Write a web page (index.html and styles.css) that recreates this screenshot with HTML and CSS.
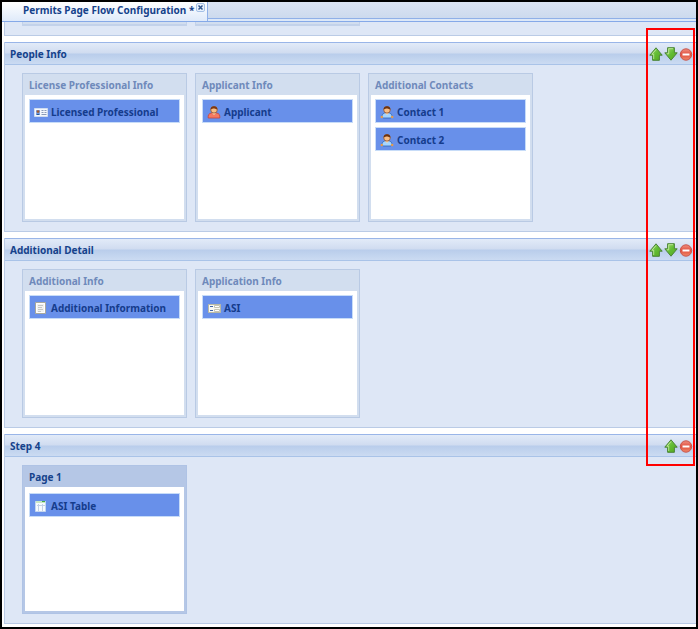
FILE: index.html
```html
<!DOCTYPE html>
<html lang="en">
<head>
<meta charset="utf-8">
<title>Permits Page Flow Configuration</title>
<link rel="stylesheet" href="styles.css">
</head>
<body>
<svg class="sprites" aria-hidden="true">
  <defs>
    <linearGradient id="leaf" x1="0" y1="0" x2="1" y2="1">
      <stop offset="0" stop-color="#a5dc70"/>
      <stop offset="0.5" stop-color="#62bc34"/>
      <stop offset="1" stop-color="#56a81c"/>
    </linearGradient>
    <linearGradient id="coral" x1="0" y1="0" x2="0" y2="1">
      <stop offset="0" stop-color="#f09080"/>
      <stop offset="0.5" stop-color="#e04f3e"/>
      <stop offset="1" stop-color="#f08a6a"/>
    </linearGradient>
    <symbol id="up" viewBox="0 0 14 14">
      <path d="M7 .8 13.2 8.2H10.4V13.3H3.6V8.2H.8Z" fill="url(#leaf)" stroke="#4b8438"/>
      <path d="M7 2.6 3 7.2H4.7V12" fill="none" stroke="#c9eba6" stroke-width=".8"/>
    </symbol>
    <symbol id="down" viewBox="0 0 14 14">
      <path d="M7 13.2 .8 5.8H3.6V.7h6.8V5.8h2.8Z" fill="url(#leaf)" stroke="#4b8438"/>
      <path d="M9 1.7H4.7V6.8H3" fill="none" stroke="#c9eba6" stroke-width=".8"/>
    </symbol>
    <symbol id="remove" viewBox="0 0 14 14">
      <circle cx="7" cy="7.500" r="5.700" fill="url(#coral)" stroke="#c9534a"/>
      <path d="M3.500 6.500h7v2h-7z" fill="#fff"/>
    </symbol>
    <symbol id="card" viewBox="0 0 14 14">
      <path d="M.5 3.500h13v8H.5z" fill="#f4f8fd" stroke="#cfdcf0"/>
      <path d="M2 5h4v5H2z" fill="#86a9e4"/>
      <circle cx="4" cy="6.600" r="1.400" fill="#a05a32"/>
      <path d="M2.300 10q1.700-3.200 3.400 0z" fill="#24569c"/>
      <path d="M7.500 5.500h2M10.500 5.500h2M7.500 7.500h2M10.500 7.500h2M7.500 9.500h5" stroke="#8b9cb8"/>
    </symbol>
    <symbol id="person-red" viewBox="0 0 14 14">
      <path d="M1.200 13q-.6-4.500 3.300-5h5q3.900.5 3.300 5z" fill="#f47a62" stroke="#c94238" stroke-width=".8"/>
      <path d="M5 8h4l-2 2z" fill="#ffd3a4"/>
      <circle cx="7" cy="4.800" r="3.300" fill="#f8bd85" stroke="#8b4a20" stroke-width=".7"/>
      <path d="M3.600 4.600C3.200 0 10.800 0 10.400 4.600 8.500 4 7 3.300 5.500 3.700Z" fill="#7c3713"/>
    </symbol>
    <symbol id="person-blue" viewBox="0 0 14 14">
      <path d="M1.600 12Q2 8.500 4.500 8h5q2.500.5 2.900 4l-2 1h-6.800z" fill="#a4d4ff" stroke="#2f62b4" stroke-width=".8"/>
      <path d="M5 8h4l-2 2z" fill="#ffd3a4"/>
      <circle cx="1.800" cy="12" r="1.200" fill="#e89b4a"/>
      <circle cx="12.200" cy="12" r="1.200" fill="#e89b4a"/>
      <circle cx="7" cy="4.800" r="3.300" fill="#f8bd85" stroke="#8b4a20" stroke-width=".7"/>
      <path d="M3.600 4.600C3.200 0 10.800 0 10.400 4.600 8.500 4 7 3.300 5.500 3.700Z" fill="#6b3110"/>
    </symbol>
    <symbol id="note" viewBox="0 0 14 14">
      <path d="M1.500 1.500h10v11h-10z" fill="#f1f2f0" stroke="#a8a89c"/>
      <path d="M2.500 2.500h8v9h-8z" fill="none" stroke="#fff"/>
      <path d="M4 4.500h5M4 6.500h4M4 8.500h5M4 10.500h3" stroke="#c4c6c4"/>
    </symbol>
    <symbol id="form" viewBox="0 0 14 14">
      <path d="M1.500 3.500h12v8h-12z" fill="#f8f8f2" stroke="#b9b9a4"/>
      <path d="M3 5.500h3M3 9.500h3" stroke="#3d62a8"/>
      <path d="M7.500 4.500h5v2h-5zM7.500 8.500h5v2h-5z" fill="#fff" stroke="#c3c3b4"/>
    </symbol>
    <symbol id="grid" viewBox="0 0 14 14">
      <path d="M1.500 2.500h10v10h-10z" fill="#f7faff" stroke="#c4d6ee"/>
      <path d="M2 2h9v2H2z" fill="#c9e6c4"/>
      <path d="M8 2h3v1H8z" fill="#47a947"/>
      <path d="M4.500 5v7M8.500 5v7M3 6.500h8" stroke="#c2d0e6"/>
    </symbol>
  </defs>
</svg>

<div class="window">
  <nav class="tabs">
    <div class="tab">
      <a href="#flow">Permits Page Flow Configuration *</a>
      <button class="close" type="button" aria-label="Close tab">
        <svg viewBox="0 0 9 9"><rect x=".5" y=".5" width="8" height="8" rx="1.500" fill="#e8f1fc" stroke="#a5c0e6"/><path d="M2.500 2.500 6.500 6.500M6.500 2.500 2.500 6.500" stroke="#31578f" stroke-width="1.500"/></svg>
      </button>
    </div>
  </nav>

  <main id="flow" class="flow">
    <div class="previous"><div class="stub"></div><div class="stub"></div></div>

    <section class="step">
      <header class="step-head">
        <h2>People Info</h2>
        <button type="button" aria-label="Move up"><svg><use href="#up"/></svg></button>
        <button type="button" aria-label="Move down"><svg><use href="#down"/></svg></button>
        <button type="button" aria-label="Remove"><svg><use href="#remove"/></svg></button>
      </header>
      <div class="pages">
        <article class="page">
          <h3>License Professional Info</h3>
          <ul><li><svg><use href="#card"/></svg>Licensed Professional</li></ul>
        </article>
        <article class="page">
          <h3>Applicant Info</h3>
          <ul><li><svg><use href="#person-red"/></svg>Applicant</li></ul>
        </article>
        <article class="page">
          <h3>Additional Contacts</h3>
          <ul>
            <li><svg><use href="#person-blue"/></svg>Contact 1</li>
            <li><svg><use href="#person-blue"/></svg>Contact 2</li>
          </ul>
        </article>
      </div>
    </section>

    <section class="step">
      <header class="step-head">
        <h2>Additional Detail</h2>
        <button type="button" aria-label="Move up"><svg><use href="#up"/></svg></button>
        <button type="button" aria-label="Move down"><svg><use href="#down"/></svg></button>
        <button type="button" aria-label="Remove"><svg><use href="#remove"/></svg></button>
      </header>
      <div class="pages">
        <article class="page">
          <h3>Additional Info</h3>
          <ul><li><svg><use href="#note"/></svg>Additional Information</li></ul>
        </article>
        <article class="page">
          <h3>Application Info</h3>
          <ul><li><svg><use href="#form"/></svg>ASI</li></ul>
        </article>
      </div>
    </section>

    <section class="step">
      <header class="step-head">
        <h2>Step 4</h2>
        <button type="button" aria-label="Move up"><svg><use href="#up"/></svg></button>
        <button type="button" aria-label="Remove"><svg><use href="#remove"/></svg></button>
      </header>
      <div class="pages">
        <article class="page selected">
          <h3>Page 1</h3>
          <ul><li><svg><use href="#grid"/></svg>ASI Table</li></ul>
        </article>
      </div>
    </section>
  </main>
  <div class="highlight"></div>
</div>
</body>
</html>
```
FILE: styles.css
```css
* { box-sizing: border-box; }

body {
  margin: 0;
  font: bold 10px/14px "Noto Sans", "DejaVu Sans Condensed", sans-serif;
  color: #15428b;
}

.sprites { position: absolute; width: 0; height: 0; }

h2, h3, ul { margin: 0; padding: 0; font: inherit; }
ul { list-style: none; }

button {
  display: block;
  padding: 0;
  border: 0;
  background: none;
}

svg { display: block; }

.window {
  position: relative;
  min-height: 100vh;
  border: 2px solid #000;
  background: #fff;
}

.tabs {
  display: flex;
  height: 20px;
  background: linear-gradient(#dbe4f3, #ccdaee 16px, #8fb0e8 16px, #8fb0e8 17px, #dce8f8 17px, #dce8f8 19px, #85a9e8 19px);
}

.tab {
  display: flex;
  gap: 2px;
  padding: 1px 2px 0 21px;
  height: 19px;
  border-right: 1px solid #8fb0e8;
  background: linear-gradient(#fff, #dfeafa);
}

.tab a { color: inherit; text-decoration: none; }
.close { height: 9px; }
.close svg { width: 9px; height: 9px; }

.flow {
  display: grid;
  gap: 6px;
  padding: 0 0 2px 2px;
}

.previous {
  display: flex;
  gap: 8px;
  height: 14px;
  padding-left: 17px;
  border: solid #bacbe6;
  border-width: 0 0 1px 1px;
  background: #dee7f6;
}

.stub {
  width: 165px;
  height: 4px;
  border: solid #c3d2ea;
  border-width: 0 1px 2px;
  background: #d2deef;
}

.step {
  border: solid #bacbe6;
  border-width: 0 0 1px 1px;
  background: #dee7f6;
}

.step-head {
  display: flex;
  align-items: center;
  gap: 1px;
  height: 23px;
  padding: 1px 3px 0 5px;
  border: solid #99b5e8;
  border-width: 1px 0;
  border-bottom-color: #a9c3e8;
  background: linear-gradient(#e2ebf8, #d0dcf0 10px, #b9cdeb 11px, #cbdbf2);
}

.step-head h2 { flex: 1; }
.step-head svg { width: 14px; height: 14px; }

.pages {
  display: flex;
  gap: 8px;
  padding: 8px 17px 9px;
}

.page {
  width: 165px;
  min-height: 149px;
  display: flex;
  flex-direction: column;
  padding: 0 2px 2px;
  border: 1px solid #b9cae4;
  background: #d2deef;
}

.page h3 {
  height: 21px;
  padding: 4px 4px 0;
  color: #6f8abb;
}

.page ul {
  flex: 1;
  display: grid;
  align-content: start;
  gap: 4px;
  padding: 4px;
  background: #fff;
}

.page li {
  display: flex;
  align-items: center;
  gap: 3px;
  height: 24px;
  padding: 2px 4px 0;
  border: 1px solid #c7dcf8;
  background: #6890ea;
  color: #153c8c;
}

.page li svg { width: 14px; height: 14px; }

.selected { border-color: #afc3e5; background: #b5c7e6; }
.selected h3 { color: #15428b; }
.selected ul { padding-top: 6px; }

.highlight {
  position: absolute;
  top: 26px;
  right: 1px;
  width: 49px;
  height: 438px;
  border: 2px solid #f00;
  pointer-events: none;
}
```
